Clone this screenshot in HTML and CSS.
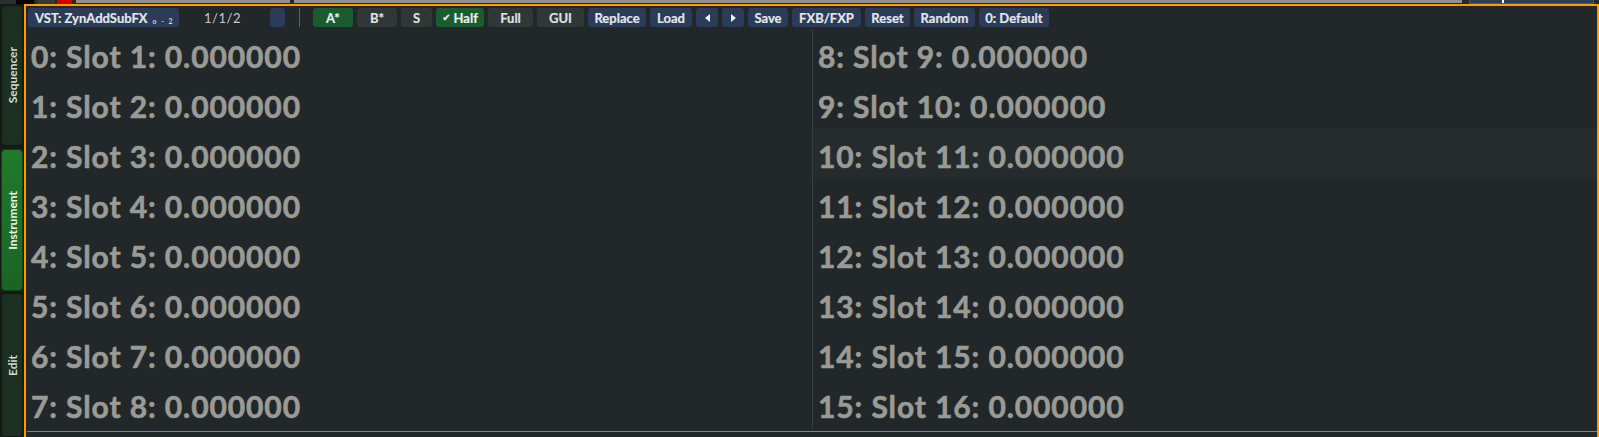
FILE: index.html
```html
<!DOCTYPE html>
<html>
<head>
<meta charset="utf-8">
<link rel="stylesheet" href="styles.css">
</head>
<body>
<div class="topstrip">
  <span class="ts ts-dark"></span>
  <span class="ts ts-black"></span>
  <span class="ts ts-box"></span>
  <span class="ts ts-red"></span>
  <span class="ts ts-grey"></span>
  <span class="ts ts-gap"></span>
  <span class="ts ts-grey2"></span>
  <span class="ts ts-navy"><i class="ts-tick"></i></span>
</div>
<div class="main">
  <nav class="tabs">
    <div class="tab tab-seq"><span>Sequencer</span></div>
    <div class="tab tab-inst active"><span>Instrument</span></div>
    <div class="tab tab-edit"><span>Edit</span></div>
  </nav>
  <section class="frame">
    <div class="toolbar">
      <div class="btn navy vst">VST: ZynAddSubFX <span class="tiny">o - 2</span></div>
      <div class="pos">1/1/2</div>
      <div class="btn navy sq"></div>
      <div class="sep"></div>
      <div class="btn green w40">A*</div>
      <div class="btn grey w40">B*</div>
      <div class="btn grey w31">S</div>
      <div class="btn green w48"><span class="chk">✔</span> Half</div>
      <div class="btn grey w45">Full</div>
      <div class="btn grey w47">GUI</div>
      <div class="btn navy w58">Replace</div>
      <div class="btn navy w42">Load</div>
      <div class="btn navy w22"><i class="tri tri-l"></i></div>
      <div class="btn navy w22"><i class="tri tri-r"></i></div>
      <div class="btn navy w40">Save</div>
      <div class="btn navy w69">FXB/FXP</div>
      <div class="btn navy w45">Reset</div>
      <div class="btn navy w61">Random</div>
      <div class="btn navy w70">0: Default</div>
    </div>
    <div class="grid">
      <div class="cell">0: Slot 1: 0.000000</div>
      <div class="cell">1: Slot 2: 0.000000</div>
      <div class="cell">2: Slot 3: 0.000000</div>
      <div class="cell">3: Slot 4: 0.000000</div>
      <div class="cell">4: Slot 5: 0.000000</div>
      <div class="cell">5: Slot 6: 0.000000</div>
      <div class="cell">6: Slot 7: 0.000000</div>
      <div class="cell">7: Slot 8: 0.000000</div>
      <div class="cell right">8: Slot 9: 0.000000</div>
      <div class="cell right">9: Slot 10: 0.000000</div>
      <div class="cell right hover">10: Slot 11: 0.000000</div>
      <div class="cell right">11: Slot 12: 0.000000</div>
      <div class="cell right">12: Slot 13: 0.000000</div>
      <div class="cell right">13: Slot 14: 0.000000</div>
      <div class="cell right">14: Slot 15: 0.000000</div>
      <div class="cell right">15: Slot 16: 0.000000</div>
    </div>
    <div class="hline"></div>
  </section>
</div>
</body>
</html>
```
FILE: styles.css
```css
html, body {
  margin: 0;
  padding: 0;
  width: 1599px;
  height: 437px;
  overflow: hidden;
  background: #1e2224;
  font-family: Lato, "Liberation Sans", sans-serif;
}

.topstrip {
  height: 4px;
  display: flex;
  background: #23282a;
}
.ts { display: block; height: 4px; }
.ts-dark { width: 16px; background: #2a2f30; }
.ts-black { width: 18px; background: #000; }
.ts-box { width: 18px; margin-left: 3px; background: #333b36; }
.ts-red { width: 15px; margin-left: 2px; background: #d40000; }
.ts-grey { width: 214px; margin-left: 4px; height: 3px; background: #8f9091; }
.ts-gap { width: 4px; }
.ts-grey2 { width: 1168px; height: 3px; background: #8f9091; }
.ts-navy {
  width: 125px;
  margin-left: 7px;
  background: #2b3c55;
  border: 1px solid #4b5868;
  border-top: 0;
  box-sizing: border-box;
  position: relative;
}
.ts-tick {
  position: absolute;
  left: 32px;
  top: 0;
  width: 2px;
  height: 3px;
  background: #fff;
}

.main {
  display: flex;
  height: 433px;
}

.tabs {
  width: 24px;
  display: flex;
  flex-direction: column;
  background: #161b18;
}
.tab {
  margin: 0 1px;
  border-radius: 4px;
  display: flex;
  align-items: center;
  justify-content: center;
  box-sizing: border-box;
  border: 1px solid #121814;
  background: #1b3020;
  color: #cfdad1;
  font-weight: 700;
  font-size: 12px;
}
.tab span {
  writing-mode: vertical-rl;
  transform: rotate(180deg);
}
.tab-seq { margin-top: 1px; height: 142px; }
.tab-inst { margin-top: 3px; height: 144px; background: linear-gradient(#217a2c, #1b6424); border-color: #14401a; color: #eef5ee; }
.tab-edit { margin-top: 2px; height: 145px; }

.frame {
  width: 1571px;
  border: 2px solid #ff9a00;
  border-bottom: 0;
  background: #22272a;
  display: flex;
  flex-direction: column;
}

.toolbar {
  height: 23px;
  box-sizing: border-box;
  padding: 2px 0 2px 2px;
  display: flex;
  align-items: stretch;
  gap: 4px;
}
.btn {
  height: 19px;
  box-sizing: border-box;
  border-radius: 3px;
  display: flex;
  align-items: center;
  justify-content: center;
  font-size: 13px;
  font-weight: 700;
  color: #e4e6e8;
  white-space: nowrap;
  -webkit-text-stroke: 0.2px currentColor;
}
.navy { background: #2a3c58; }
.green { background: #1a5c30; color: #e8efe9; }
.grey { background: #2f3836; color: #dfe2e0; }

.vst { width: 151px; justify-content: flex-start; padding-left: 7px; }
.tiny {
  font-size: 7px;
  font-weight: 700;
  margin-left: 5px;
  margin-top: 6px;
  letter-spacing: 1.5px;
  color: #d0d4da;
  -webkit-text-stroke: 0;
}
.pos {
  width: 87px;
  display: flex;
  align-items: center;
  justify-content: center;
  font-size: 13px;
  color: #c5c8ca;
  letter-spacing: 0.5px;
  margin-left: -4px;
}
.sq { width: 15px; }
.sep {
  width: 1px;
  background: #5c6164;
  margin: 0 9px 0 10px;
}
.chk {
  font-family: "DejaVu Sans", sans-serif;
  font-size: 10px;
  margin-right: 3px;
}
.w22 { width: 22px; }
.w31 { width: 31px; }
.w40 { width: 40px; }
.w42 { width: 42px; }
.w45 { width: 45px; }
.w47 { width: 47px; }
.w48 { width: 48px; }
.w58 { width: 58px; }
.w61 { width: 61px; }
.w69 { width: 69px; }
.w70 { width: 70px; }

.tri {
  display: block;
  width: 0;
  height: 0;
  border-top: 4px solid transparent;
  border-bottom: 4px solid transparent;
}
.tri-l { border-right: 5px solid #f0f2f4; }
.tri-r { border-left: 5px solid #f0f2f4; }

.grid {
  height: 400px;
  display: grid;
  grid-template-columns: 786px 1fr;
  grid-template-rows: repeat(8, 50px);
  grid-auto-flow: column;
}
.cell {
  box-sizing: border-box;
  padding: 4px 0 0 5px;
  font-size: 30px;
  font-weight: 700;
  line-height: 46px;
  letter-spacing: 0.9px;
  -webkit-text-stroke: 0.6px #9a9b95;
  color: #9a9b95;
  white-space: nowrap;
}
.cell.right { border-left: 1px solid #383e41; }
.cell.hover { background: #262c2e; }

.hline {
  margin-top: 2px;
  margin-left: 1px;
  height: 1px;
  background: #7e8283;
}
```
